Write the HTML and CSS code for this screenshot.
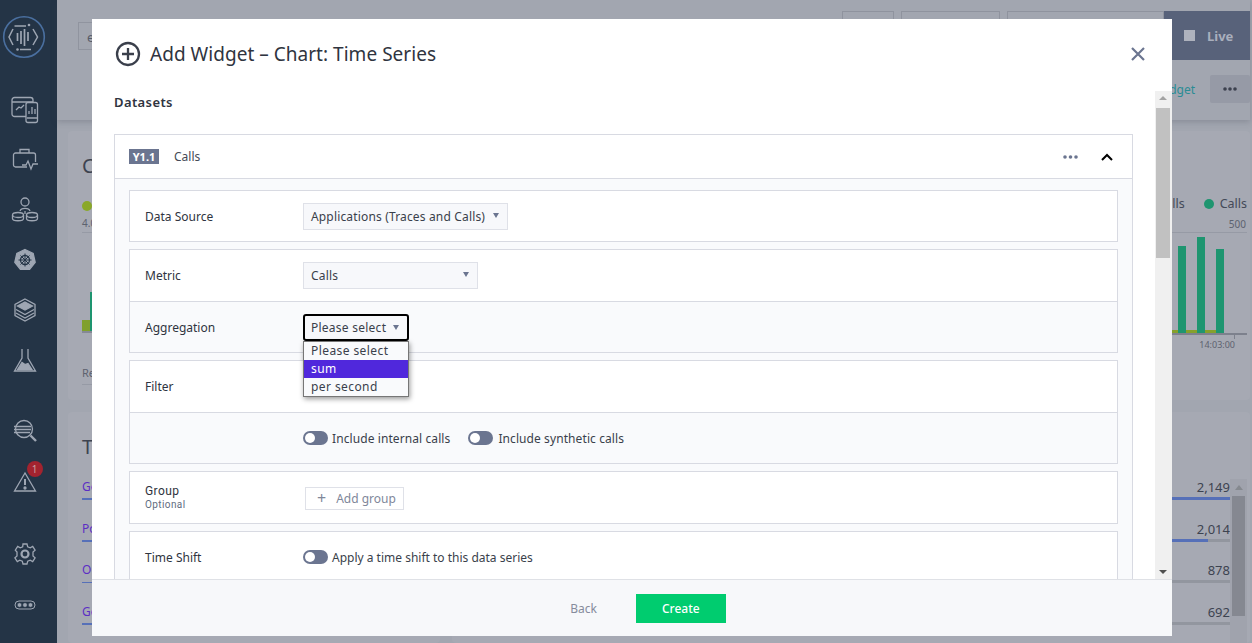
FILE: index.html
```html
<!DOCTYPE html>
<html lang="en"><head>
<meta charset="utf-8">
<title>Add Widget</title>
<link rel="stylesheet" href="styles.css">
</head>
<body>
<div class="app">
  <nav class="sidebar">
    <svg class="logo" width="46" height="46" viewBox="0 0 46 46" fill="none" stroke="#9ea6b3" stroke-width="1.500">
      <circle cx="23" cy="23" r="20.300" stroke="#4a6f9f" stroke-width="1.600"/>
      <path d="M12 15l-4 8 4 8M32 15l4.500 8-4.500 8M13.500 12H25M19 35.500h11"/>
      <circle cx="28" cy="11" r="1.300" fill="#9ea6b3" stroke="none"/><circle cx="16.500" cy="35.500" r="1.300" fill="#9ea6b3" stroke="none"/>
      <path d="M16.500 19v8M20 17v13M23.500 15v17M27 18v9" stroke-width="1.700"/>
    </svg>
    <div class="nav-group nav-top">
      <svg class="nav-icon" viewBox="0 0 28 28"><rect x="1" y="1.500" width="21" height="19" rx="2.500"/><path d="M1 6h21M5 14l3-3 2 1 3-3"/><rect x="15" y="6.500" width="11.500" height="20" rx="2" fill="#243446"/><path d="M18 18v-3M21 18v-7M24 18v-5M16 22h10"/></svg>
      <svg class="nav-icon" viewBox="0 0 28 28"><path d="M9 7V3.500h9V7"/><path d="M16 21H4.500a2 2 0 0 1-2-2V9a2 2 0 0 1 2-2h18a2 2 0 0 1 2 2v7"/><path d="M11 19h4l2-4 3 8 2-5h5"/></svg>
      <svg class="nav-icon" viewBox="0 0 28 28"><circle cx="14" cy="6" r="4"/><path d="M9 15c1-3.500 9-3.500 10 0M14 15v3"/><ellipse cx="7" cy="19" rx="5.500" ry="2.500"/><path d="M1.500 19v3.500c0 3 11 3 11 0V19"/><ellipse cx="21" cy="19" rx="5.500" ry="2.500"/><path d="M15.500 19v3.500c0 3 11 3 11 0V19"/></svg>
      <svg class="nav-icon" viewBox="0 0 28 28"><path d="M14 3.500l8.200 4 2 8.800-5.600 7H9.400l-5.600-7 2-8.800z" fill="#9ea6b3"/><circle cx="14" cy="14" r="4.500" stroke="#243446"/><path d="M14 7.500v13M7.500 14h13M9.500 9.500l9 9M18.500 9.500l-9 9" stroke="#243446" stroke-width="1"/></svg>
      <svg class="nav-icon" viewBox="0 0 28 28"><path d="M14 3l10 5.500v11L14 25 4 19.500v-11z"/><path d="M14 6l7.500 4-7.500 4-7.500-4z" fill="#9ea6b3"/><path d="M5 13.500l9 5 9-5M5 17l9 5 9-5"/></svg>
      <svg class="nav-icon" viewBox="0 0 28 28"><path d="M11 3v9L3.500 25h21L17 12V3"/><path d="M6.500 23.500l4.500-7 3 2 3-1 4 6z" fill="#9ea6b3"/></svg>
    </div>
    <div class="nav-group nav-mid">
      <svg class="nav-icon" viewBox="0 0 28 28"><circle cx="13" cy="12" r="8.500"/><path d="M19.500 18.500l5.500 5.500" stroke-width="2.400"/><path d="M3 9.500h17M3 12.500h17M3 15.500h16" stroke-width="1.300"/></svg>
      <div class="nav-alert">
        <svg class="nav-icon" viewBox="0 0 28 28"><path d="M14 5L3.500 23h21z"/><path d="M14 11v6" stroke-width="2"/><circle cx="14" cy="20" r="1" fill="#9ea6b3"/></svg>
        <span class="badge">1</span>
      </div>
    </div>
    <div class="nav-group nav-end">
      <svg class="nav-icon" viewBox="0 0 28 28"><path d="M12 4h4l.7 2.800 2.500 1 2.500-1.400 2.400 3.800-2.100 1.900v3.800l2.100 1.900-2.400 3.800-2.500-1.400-2.500 1-.7 2.800h-4l-.7-2.800-2.500-1-2.500 1.400-2.400-3.800 2.100-1.900v-3.800L4.300 10.200l2.400-3.800 2.500 1.400 2.500-1z"/><circle cx="14" cy="14" r="3.500" stroke-width="2.200"/></svg>
      <svg class="nav-icon" viewBox="0 0 28 28"><rect x="4" y="10" width="20" height="8" rx="4" stroke-width="1"/><circle cx="8.500" cy="14" r="2.300" fill="#9ea6b3" stroke="#243446" stroke-width=".6"/><circle cx="14" cy="14" r="2.300" fill="#9ea6b3" stroke="#243446" stroke-width=".6"/><circle cx="19.500" cy="14" r="2.300" fill="#9ea6b3" stroke="#243446" stroke-width=".6"/></svg>
    </div>
  </nav>

  <main class="page">
    <header class="topbar">
      <div class="top-row">
        <div class="search">e</div>
        <div class="top-btn w-a"></div>
        <div class="top-btn w-b"></div>
        <div class="top-btn w-c"></div>
        <div class="live"><span class="live-box"></span>Live</div>
      </div>
      <div class="sub-row">
        <a class="add-link">Add Widget</a>
        <div class="more-btn"><svg width="14" height="4" viewBox="0 0 14 4" fill="#3c414e"><circle cx="2" cy="2" r="1.800"/><circle cx="7" cy="2" r="1.800"/><circle cx="12" cy="2" r="1.800"/></svg></div>
      </div>
    </header>
    <section class="cards">
      <div class="card card-chart">
        <h3 class="card-title">Calls</h3>
        <div class="legend"><span class="dot dot-olive"></span></div>
        <div class="axis-val">4.0</div>
        <div class="mini-chart">
          <span class="mini-olive"></span><span class="mini-green"></span>
        </div>
        <div class="card-foot">Re</div>
      </div>
      <div class="card card-chart-right">
        <div class="legend-right"><span>alls</span><span class="dot dot-green"></span><span>Calls</span></div>
        <div class="axis-top">500</div>
        <div class="bars">
          <span class="bar bar-a"></span><span class="bar bar-b"></span><span class="bar bar-c"></span>
        </div>
        <div class="time-label">14:03:00</div>
      </div>
      <div class="card card-table">
        <h3 class="card-title">Top</h3>
        <div class="list-left">
          <div class="list-item">Get</div>
          <div class="list-item">Post</div>
          <div class="list-item short">Out</div>
          <div class="list-item">Get</div>
        </div>
      </div>
      <div class="card card-table-right">
        <div class="nums">
          <div class="num-row"><span>2,149</span><i class="meter m-full"></i></div>
          <div class="num-row"><span>2,014</span><i class="meter m-part"></i></div>
          <div class="num-row"><span>878</span><i class="meter"></i></div>
          <div class="num-row"><span>692</span><i class="meter"></i></div>
        </div>
        <div class="bg-scroll"><span class="bg-up"></span><span class="bg-thumb"></span></div>
      </div>
    </section>
  </main>
</div>

<div class="modal">
  <div class="modal-head">
    <svg class="plus-icon" width="26" height="26" viewBox="0 0 26 26" fill="none" stroke="#3a3f4b" stroke-width="2.300"><circle cx="13" cy="13" r="11"/><path d="M13 7v12M7 13h12"/></svg>
    <h2 class="modal-title">Add Widget – Chart: Time Series</h2>
    <svg class="close-icon" width="14" height="14" viewBox="0 0 14 14" stroke="#6b7590" stroke-width="2.200"><path d="M1 1l12 12M13 1L1 13"/></svg>
  </div>
  <div class="modal-body">
    <h4 class="datasets">Datasets</h4>
    <div class="dataset">
      <div class="dataset-head">
        <span class="series-tag">Y1.1</span>
        <span class="series-name">Calls</span>
        <svg class="head-dots" width="15" height="4" viewBox="0 0 15 4" fill="#6b7590"><circle cx="2" cy="2" r="1.800"/><circle cx="7.500" cy="2" r="1.800"/><circle cx="13" cy="2" r="1.800"/></svg>
        <svg class="chevron" width="12" height="8" viewBox="0 0 12 8" fill="none" stroke="#000" stroke-width="2"><path d="M1 7l5-5 5 5"/></svg>
      </div>
      <div class="dataset-body">
        <div class="box">
          <div class="row"><label class="row-label">Data Source</label>
            <div class="select sel-source">Applications (Traces and Calls)<i class="caret"></i></div></div>
        </div>
        <div class="box">
          <div class="row row-split"><label class="row-label">Metric</label>
            <div class="select sel-metric">Calls<i class="caret"></i></div></div>
          <div class="row row-alt"><label class="row-label">Aggregation</label>
            <div class="select sel-focus">Please select<i class="caret"></i>
              <ul class="options">
                <li>Please select</li>
                <li class="picked">sum</li>
                <li>per second</li>
              </ul>
            </div></div>
        </div>
        <div class="box">
          <div class="row row-split"><label class="row-label">Filter</label></div>
          <div class="row row-alt"><label class="row-label"></label>
            <span class="toggle"></span><span class="toggle-text">Include internal calls</span>
            <span class="toggle toggle-next"></span><span class="toggle-text">Include synthetic calls</span></div>
        </div>
        <div class="box">
          <div class="row row-group"><label class="row-label">Group<small>Optional</small></label>
            <div class="add-group"><span class="add-plus">+</span>Add group</div></div>
        </div>
        <div class="box">
          <div class="row"><label class="row-label">Time Shift</label>
            <span class="toggle"></span><span class="toggle-text shift-text">Apply a time shift to this data series</span></div>
        </div>
      </div>
    </div>
    <div class="scrollbar">
      <span class="arrow-up"></span>
      <span class="thumb"></span>
      <span class="arrow-down"></span>
    </div>
  </div>
  <div class="modal-foot">
    <span class="back">Back</span>
    <button class="create">Create</button>
  </div>
</div>
</body></html>
```

FILE: styles.css
```css
*{ box-sizing:border-box; }
html,body{ margin:0; height:100%; overflow:hidden; }
body{ font-family:"Noto Sans","Open Sans",sans-serif; font-size:13px; color:#2f3440; background:#a2a6b0; }

.app{ display:flex; height:643px; }
.sidebar{ width:57px; flex:none; background:#243446; display:flex; flex-direction:column; align-items:center; padding-top:14px; }
.logo{ margin-left:-9px; }
.nav-group{ display:flex; flex-direction:column; align-items:center; gap:22px; margin-left:-8px; }
.nav-top{ margin-top:36px; }
.nav-mid{ margin-top:43px; gap:23px; }
.nav-end{ margin-top:44px; gap:23px; }
.nav-icon{ width:28px; height:28px; display:block; fill:none; stroke:#9ea6b3; stroke-width:1.300; }
.nav-alert{ position:relative; }
.badge{ position:absolute; top:-7px; left:16px; width:16px; height:16px; border-radius:50%; background:#a3232f; color:#c9a0a4; font-size:10px; line-height:16px; text-align:center; }

.page{ flex:1; display:flex; flex-direction:column; min-width:0; padding-right:2px; }
.topbar{ height:120px; box-shadow:0 2px 6px rgba(60,65,80,.25); padding-top:11px; display:flex; flex-direction:column; }
.top-row{ display:flex; align-items:flex-start; gap:7px; height:49px; }
.search{ margin:11px auto 0 21px; width:60px; height:28px; border:1px solid #90949f; padding:5px 8px; color:#565b68; }
.top-btn{ height:20px; border:1px solid #8f939e; border-bottom:0; }
.w-a{ width:52px; }
.w-b{ width:99px; }
.w-c{ width:157px; margin-right:-7px; }
.live{ width:86px; height:49px; background:#58627a; color:#a9afbd; font-weight:700; display:flex; align-items:center; padding-left:20px; gap:12px; }
.live-box{ width:11px; height:11px; background:#aeb2bd; }
.sub-row{ display:flex; justify-content:flex-end; align-items:center; gap:15px; margin-top:15px; }
.add-link{ color:#2a8c94; font-size:12px; }
.more-btn{ width:40px; height:28px; border-radius:2px; background:#969aa6; display:flex; align-items:center; justify-content:center; }

.cards{ display:grid; grid-template-columns:372px 1fr; grid-template-rows:269px 1fr; gap:12px; padding:11px 0 0 11px; flex:1; }
.card{ background:#a6a9b3; border-radius:4px; min-height:0; overflow:hidden; }
.card-chart,.card-table{ padding:21px 0 0 14px; }
.card-title{ margin:0; font-size:20px; line-height:27px; font-weight:400; color:#3d4350; }
.legend{ margin-top:18px; height:14px; }
.dot{ display:inline-block; width:10px; height:10px; border-radius:50%; }
.dot-olive{ background:#8aa828; }
.dot-green{ background:#1e9570; }
.axis-val{ font-size:10px; line-height:14px; color:#5d626f; margin-top:5px; padding-bottom:2px; border-bottom:1px solid #969aa5; }
.mini-chart{ display:flex; align-items:flex-end; height:100px; border-bottom:2px solid #858995; }
.mini-olive{ width:8px; height:11px; background:#80a02c; }
.mini-green{ width:8px; height:39px; background:#1e9570; }
.card-foot{ margin-top:33px; font-size:11px; line-height:14px; color:#5d626f; border-bottom:1px solid #969aa5; padding-bottom:4px; }

.card-chart-right{ padding:65px 3px 0 0; }
.legend-right{ display:flex; justify-content:flex-end; align-items:center; gap:6px; font-size:12.500px; line-height:16px; color:#444a58; }
.legend-right span:first-child{ margin-right:13px; }
.axis-top{ text-align:right; font-size:10px; line-height:14px; color:#5d626f; margin-top:5px; padding:0 1px 1px 0; border-bottom:1px solid #969aa5; }
.bars{ position:relative; height:102px; display:flex; justify-content:flex-end; align-items:flex-end; gap:11px; padding:0 23px 0 0; border-bottom:2px solid #7d818d; background:linear-gradient(#86a02c,#86a02c) no-repeat right 31px bottom/44px 3px; }
.bars::after{ content:""; position:absolute; right:12px; bottom:-6px; width:1px; height:4px; background:#7d818d; }
.bar{ width:8px; background:#1e9570; }
.bar-a{ height:87px; }
.bar-b{ height:96px; }
.bar-c{ height:84px; }
.time-label{ text-align:right; font-size:9px; line-height:14px; color:#5d626f; margin-top:3px; padding-right:12px; }

.list-left{ margin-top:19px; display:flex; flex-direction:column; gap:20.500px; }
.list-item{ color:#5c2ec4; font-size:12px; line-height:16px; height:21px; border-bottom:2px solid #5670b8; }
.list-item.short{ border-bottom-width:1px; }
.card-table-right{ display:flex; padding:67px 3px 0 0; }
.nums{ flex:1; display:flex; flex-direction:column; gap:20.500px; }
.num-row{ text-align:right; font-size:13px; line-height:16px; color:#3d4350; height:21px; display:flex; flex-direction:column; }
.meter{ height:3px; background:#92969f; margin-top:auto; display:block; }
.m-full{ background:#5670b8; }
.m-part{ background:linear-gradient(to right,#5670b8 97.200%,#92969f 97.200%); }
.bg-scroll{ width:17px; background:#a0a3ad; padding:0 2px; }
.bg-up{ display:block; width:0; height:0; margin:6px auto 6px; border:4px solid transparent; border-top:0; border-bottom:5px solid #85898f; }
.bg-thumb{ display:block; height:120px; background:#858891; }

.modal{ position:absolute; left:92px; top:19px; width:1080px; height:617px; background:#fff; display:flex; flex-direction:column; }
.modal-head{ height:72px; flex:none; display:flex; align-items:center; padding:0 27px 2px 23px; }
.plus-icon{ margin-right:9px; }
.modal-title{ margin:0; font-size:19px; font-weight:400; color:#2f3440; flex:1; letter-spacing:.03px; }
.modal-body{ flex:1; position:relative; overflow:hidden; min-height:0; padding-left:22px; }
.datasets{ margin:3px 0 23px; font-size:13px; font-weight:600; letter-spacing:.4px; line-height:17px; color:#2f3440; }
.dataset{ width:1019px; border:1px solid #d8dae2; }
.dataset-head{ height:44px; display:flex; align-items:center; padding:0 19px 0 14px; border-bottom:1px solid #d8dae2; }
.series-tag{ width:30px; height:15px; background:#6b7590; color:#fff; font-size:11px; font-weight:700; line-height:15px; text-align:center; margin-right:15px; }
.series-name{ font-size:12px; color:#444a56; flex:1; }
.head-dots{ margin-right:23px; }
.dataset-body{ background:#f9fafc; padding:11px 14px 0; display:flex; flex-direction:column; gap:7px; }
.box{ border:1px solid #d8dae2; background:#fff; }
.row{ height:50px; display:flex; align-items:center; }
.row-split{ height:51px; }
.row + .row{ height:51px; border-top:1px solid #d8dae2; }
.row-group{ height:51px; padding-top:1px; }
.row-alt{ background:#f9fafc; }
.row-label{ width:173px; flex:none; padding-left:15px; font-size:12px; line-height:15px; color:#2f3440; }
.row-group .row-label{ font-family:Roboto,sans-serif; line-height:13px; letter-spacing:.4px; }
.row-label small{ display:block; font-size:10px; line-height:13px; letter-spacing:.4px; color:#5f6c80; }
.select{ position:relative; height:27px; background:#f7f8fb; border:1px solid #dfe1e8; padding:0 7px; line-height:25px; font-size:12px; letter-spacing:.16px; color:#3a3f4b; }
.sel-source{ width:205px; }
.sel-metric{ width:175px; }
.sel-focus{ width:106px; border:2px solid #000; border-radius:3px; padding:0 6px; line-height:23px; letter-spacing:.25px; }
.caret{ position:absolute; right:8px; top:9px; width:0; height:0; border:3.500px solid transparent; border-bottom:0; border-top:5px solid #6b7590; }
.options{ position:absolute; left:-2px; top:25px; width:106px; margin:0; padding:0; list-style:none; background:#f9fafc; border:1px solid #767676; box-shadow:1px 2px 5px rgba(0,0,0,.4); z-index:2; letter-spacing:.42px; }
.options li{ height:18px; line-height:18px; padding:0 7px; color:#3a3f4b; }
.options .picked{ background:#5028dc; color:#fff; }
.toggle{ width:25px; height:14px; border-radius:7px; background:#6b7590; position:relative; flex:none; }
.toggle::after{ content:""; position:absolute; left:2px; top:2px; width:10px; height:10px; border-radius:50%; background:#fff; }
.toggle-text{ margin-left:4px; font-size:12px; letter-spacing:.09px; color:#3a3f4b; }
.shift-text{ letter-spacing:0; }
.toggle-next{ margin-left:18px; }
.toggle-next + .toggle-text{ margin-left:5px; }
.add-group{ margin-left:2px; width:99px; height:23px; border:1px solid #dfe1e8; color:#80879a; font-size:12px; line-height:21px; padding-left:11px; font-family:"Noto Sans",sans-serif; }
.add-plus{ font-size:16px; margin-right:10px; vertical-align:-1px; }

.scrollbar{ position:absolute; right:0; top:0; bottom:0; width:17px; background:#f0f0f0; }
.thumb{ position:absolute; left:1px; top:17px; width:14px; height:150px; background:#c1c1c1; }
.arrow-up,.arrow-down{ position:absolute; left:4px; width:0; height:0; border:4px solid transparent; }
.arrow-up{ top:5px; border-top:0; border-bottom:4px solid #a3a3a3; }
.arrow-down{ bottom:5px; border-bottom:0; border-top:4px solid #505050; }

.modal-foot{ height:57px; flex:none; background:#f7f8fa; border-top:1px solid #dfe1e6; display:flex; align-items:center; justify-content:center; gap:39px; padding-left:32px; }
.back{ color:#868c9c; font-size:12px; }
.create{ width:90px; height:29px; border:0; background:#00cc6f; color:#fff; font:500 12px "Noto Sans",sans-serif; }
```
